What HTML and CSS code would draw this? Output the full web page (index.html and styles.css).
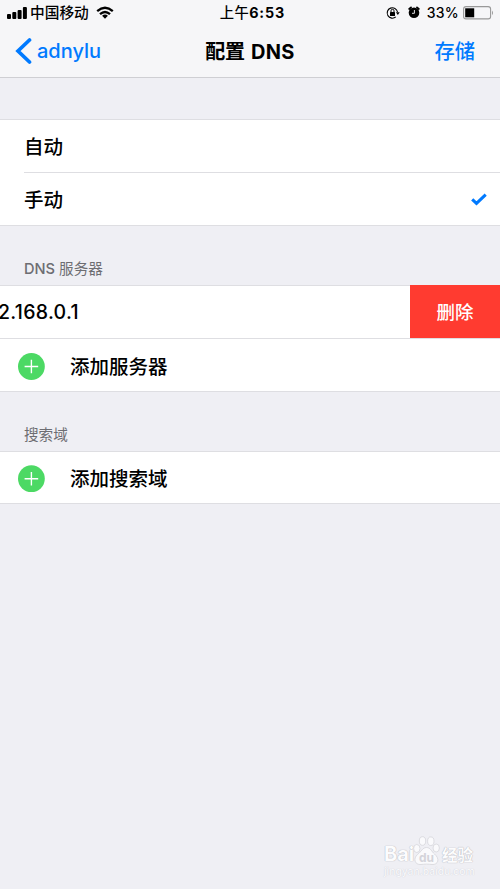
FILE: index.html
```html
<!DOCTYPE html>
<html lang="zh-CN">
<head>
<meta charset="utf-8">
<title>配置 DNS</title>
<link rel="stylesheet" href="styles.css">
</head>
<body>
<header class="header">
  <div class="status">
    <div class="status-left">
      <svg class="signal" width="20" height="12" viewBox="0 0 20 12"><rect x="0" y="7" width="4" height="5" rx="1"/><rect x="5.3" y="5" width="4" height="7" rx="1"/><rect x="10.6" y="3" width="4" height="9" rx="1"/><rect x="15.9" y="0" width="4" height="12" rx="1"/></svg>
      <span class="carrier">中国移动</span>
      <svg class="wifi" width="18" height="13" viewBox="0 0 18 13"><g fill="none" stroke="#000" stroke-width="2.3"><path d="M1.2 5.2Q9-1.6 16.8 5.2"/><path d="M4 8.2Q9 3.800 14 8.200"/></g><path d="M6.100 9.700Q9 7.300 11.900 9.700L9 12.700Z"/></svg>
    </div>
    <div class="time">上午<b>6:53</b></div>
    <div class="status-right">
      <svg class="lock" width="14" height="14" viewBox="0 0 14 14"><path d="M9.800 10.900A5.200 5.200 0 1 1 11.500 6" fill="none" stroke="#000" stroke-width="1.100"/><path d="M9.900 6.300h3.800l-1.900 2.800z"/><rect x="4" y="6" width="5" height="4" rx=".5"/><path d="M5 6V4.800a1.500 1.500 0 0 1 3 0V6" fill="none" stroke="#000"/></svg>
      <svg class="alarm" width="12" height="13" viewBox="0 0 12 13"><circle cx="6" cy="6.800" r="5.300"/><path d="M1.200 3L3 1.400M10.800 3L9 1.400" stroke="#000" stroke-width="1.800" stroke-linecap="round"/><path d="M6.400 4v3.300H4" fill="none" stroke="#f6f6f8" stroke-width=".9"/></svg>
      <span class="percent">33%</span>
      <svg class="battery" width="31" height="14" viewBox="0 0 31 14"><rect x=".6" y=".6" width="27" height="12.300" rx="2.500" fill="none" stroke="#999" stroke-width="1.100"/><rect x="2.200" y="2.300" width="9" height="9"/><path d="M29 4.500q2 2.400 0 4.800z" fill="#999"/></svg>
    </div>
  </div>
  <nav class="nav">
    <a class="back"><svg width="17" height="26" viewBox="0 0 17 26"><path d="M14.500 2L3 13l11.500 11" fill="none" stroke="#007aff" stroke-width="3.700" stroke-linecap="round"/></svg><span class="back-label">adnylu</span></a>
    <h1 class="title">配置 <span class="latin">DNS</span></h1>
    <a class="save">存储</a>
  </nav>
</header>
<main>
  <section class="group mode">
    <div class="row text-row">自动</div>
    <div class="row text-row inset">手动<svg class="check" width="16" height="13" viewBox="0 0 16 13"><path d="M1.200 6.300L5.500 10.300 14.700 1.700" fill="none" stroke="#007aff" stroke-width="3.100"/></svg></div>
  </section>
  <h2 class="section-title"><span class="dns">DNS</span> 服务器</h2>
  <section class="group">
    <div class="row swiped"><span class="address">2.168.0.1</span><span class="delete">删除</span></div>
    <div class="row add ruled"><svg class="plus" width="28" height="28" viewBox="0 0 28 28"><circle cx="14.400" cy="13.500" r="13.400" fill="#4cd964"/><path d="M7.600 13.500h13.600M14.400 6.700v13.600" stroke="#fff" stroke-width="1.400"/></svg><span>添加服务器</span></div>
  </section>
  <h2 class="section-title">搜索域</h2>
  <section class="group">
    <div class="row add last"><svg class="plus" width="28" height="28" viewBox="0 0 28 28"><circle cx="14.400" cy="13.700" r="13.400" fill="#4cd964"/><path d="M7.600 13.700h13.600M14.400 6.900v13.600" stroke="#fff" stroke-width="1.400"/></svg><span>添加搜索域</span></div>
  </section>
</main>
<div class="watermark">
  <div class="brand"><span class="bai">Bai</span><svg width="27" height="30" viewBox="0 0 27 30"><g fill="#fafafc" stroke="#d5d5da" stroke-width=".8"><ellipse cx="3.800" cy="12.500" rx="3.200" ry="4"/><ellipse cx="9.500" cy="5" rx="3.200" ry="4.300"/><ellipse cx="17.800" cy="5.200" rx="3.200" ry="4.300"/><ellipse cx="23.200" cy="12" rx="3.200" ry="4"/><path d="M13.500 11.500c4 0 5 4 8 6.500 5.500 4.500 4 11-2.500 10.500-4-.5-7-.5-11 0C1.500 29 0 22.500 4.500 18.500c4-3 5-7 9-7z"/></g><text x="6" y="26" class="du">du</text></svg><span class="jy">经验</span></div>
  <div class="site">jingyan.baidu.com</div>
</div>
</body>
</html>
```

FILE: styles.css
```css
* { box-sizing: border-box; }
body {
  margin: 0;
  height: 889px;
  overflow: hidden;
  background: #efeff4;
  color: #000;
  font-family: Inter, "Noto Sans CJK SC", sans-serif;
  font-weight: 500;
}
svg { display: block; flex: none; }
.header { height: 78px; background: #f6f6f8; border-bottom: 1px solid #cfcfd3; }
.status {
  display: grid;
  grid-template-columns: 1fr auto 1fr;
  height: 25px;
  align-items: center;
  padding: 0 6px 0 11px;
  font-size: 14px;
  line-height: 20px;
}
.status-left, .status-right { display: flex; align-items: center; }
.status-left { margin-left: -4px; }
.status-right { justify-content: flex-end; }
.carrier { margin-left: 3px; font-size: 14.7px; }
.wifi { margin-left: 7px; }
.time { letter-spacing: .4px; font-size: 14.3px; }
.time b { font-weight: 700; letter-spacing: .9px; }
.alarm { margin-left: 8px; }
.percent { margin: 0 4px 0 7px; font-size: 14px; letter-spacing: .3px; }
.nav {
  display: grid;
  grid-template-columns: 1fr auto 1fr;
  align-items: center;
  height: 52px;
  padding: 0 25px;
  font-size: 20px;
  line-height: 28px;
}
.back { display: flex; align-items: center; margin: -1px 0 0 -10px; color: #007aff; }
.back-label { margin-left: 5px; }
.title { margin: 2px 0 0; font-size: 20px; font-weight: 700; line-height: 28px; }
.latin { letter-spacing: .4px; margin-left: 1px; }
.save { justify-self: end; margin-top: 2px; color: #007aff; font-size: 20.3px; }
.group { background: #fff; border-top: 1px solid #dedee2; border-bottom: 1px solid #dedee2; }
.mode { margin-top: 41px; }
.row { display: flex; align-items: center; height: 52px; padding-top: 2px; font-size: 19.5px; line-height: 28px; }
.text-row { margin-left: 24px; }
.inset, .ruled { height: 53px; border-top: 1px solid #dedee2; }
.check { margin: -2px 13px 0 auto; }
.section-title {
  height: 59px;
  margin: 0;
  padding: 33px 0 0 24px;
  color: #6d6d72;
  font-size: 14.6px;
  font-weight: 400;
  line-height: 20px;
}
.dns { font-weight: 500; font-size: 14.6px; }
.swiped { justify-content: space-between; padding-top: 0; }
.address { margin-left: -2px; font-size: 19.5px; font-weight: 550; letter-spacing: .3px; }
.delete {
  display: flex;
  align-items: center;
  justify-content: center;
  align-self: stretch;
  width: 90px;
  margin-top: -1px;
  background: #ff3b30;
  color: #fff;
  font-size: 18.5px;
}
.add { padding-left: 17px; gap: 25px; }
.ruled { padding-top: 3px; }
.last { height: 51px; }
.watermark {
  position: absolute;
  left: 384px;
  top: 834px;
  width: 100px;
  color: #fcfcfd;
  text-shadow: 0 0 1px #b0b0b8, 0 0 1px #c4c4ca;
}
.brand { display: flex; height: 32px; align-items: flex-end; }
.bai { width: 29px; font-weight: 700; font-size: 20px; line-height: 23px; }
.jy { font-size: 15.5px; font-weight: 700; margin-left: 2px; line-height: 21px; }
.du { font-size: 12px; font-weight: 700; fill: #d4d4da; text-shadow: none; }
.site { font-size: 10.3px; line-height: 12px; margin-top: -1px; color: #f8f8fb; text-shadow: 0 0 1px #c4c4cc; }
```
